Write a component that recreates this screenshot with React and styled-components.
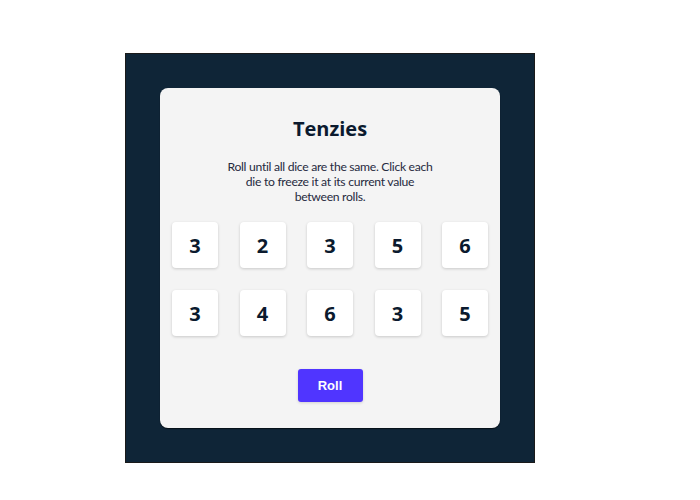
import React from "react";
import styled, { createGlobalStyle } from "styled-components";

const Global = createGlobalStyle`
  html, body { margin: 0; padding: 0; background: #ffffff; }
  body { font-family: "Open Sans", "Noto Sans", sans-serif; }
`;

const Page = styled.div`
  padding: 53px 0 0 125px;
`;

const Frame = styled.main`
  box-sizing: border-box;
  width: 410px;
  height: 410px;
  background: #0f2537;
  border: 1px solid #1a1a1a;
  padding: 34px;
`;

const Card = styled.section`
  box-sizing: border-box;
  width: 340px;
  height: 340px;
  background: #f4f4f4;
  border-radius: 8px;
  box-shadow: 0 1px 1px rgba(0, 0, 0, 0.6);
  display: flex;
  flex-direction: column;
  align-items: center;
  padding-top: 29px;
`;

const Title = styled.h1`
  margin: 0;
  font-family: "Open Sans", "Noto Sans", sans-serif;
  font-weight: 700;
  font-size: 20px;
  line-height: 24px;
  color: #0b1a2e;
`;

const Instructions = styled.p`
  margin: 18px 0 0;
  max-width: 212px;
  text-align: center;
  font-family: Lato, "Noto Sans", sans-serif;
  font-size: 12.2px;
  letter-spacing: -0.3px;
  line-height: 15px;
  color: #262a40;
`;

const DiceGrid = styled.div`
  margin-top: 18px;
  display: grid;
  grid-template-columns: repeat(5, 46px);
  column-gap: 21.5px;
  row-gap: 22px;
`;

const Die = styled.button`
  width: 46px;
  height: 46px;
  border: none;
  border-radius: 4px;
  background: ${(p) => (p.$held ? "#59E391" : "#ffffff")};
  box-shadow: 0 1px 3px rgba(0, 0, 0, 0.18);
  display: flex;
  align-items: center;
  justify-content: center;
  padding: 0;
  font-family: "Open Sans", "Noto Sans", sans-serif;
  font-weight: 700;
  font-size: 20px;
  color: #0b1a2e;
  cursor: pointer;
`;

const RollButton = styled.button`
  margin-top: 33px;
  width: 65px;
  height: 33px;
  border: none;
  border-radius: 3px;
  background: #5035ff;
  box-shadow: 0 1px 3px rgba(0, 0, 0, 0.15);
  color: #ffffff;
  font-family: "Liberation Sans", Arial, sans-serif;
  font-weight: 700;
  font-size: 13px;
  cursor: pointer;
`;

const dice = [3, 2, 3, 5, 6, 3, 4, 6, 3, 5];

export default function App() {
  return (
    <>
      <Global />
      <Page>
        <Frame>
          <Card>
            <Title>Tenzies</Title>
            <Instructions>
              Roll until all dice are the same. Click each die to freeze it at
              its current value between rolls.
            </Instructions>
            <DiceGrid>
              {dice.map((v, i) => (
                <Die key={i}>{v}</Die>
              ))}
            </DiceGrid>
            <RollButton>Roll</RollButton>
          </Card>
        </Frame>
      </Page>
    </>
  );
}
